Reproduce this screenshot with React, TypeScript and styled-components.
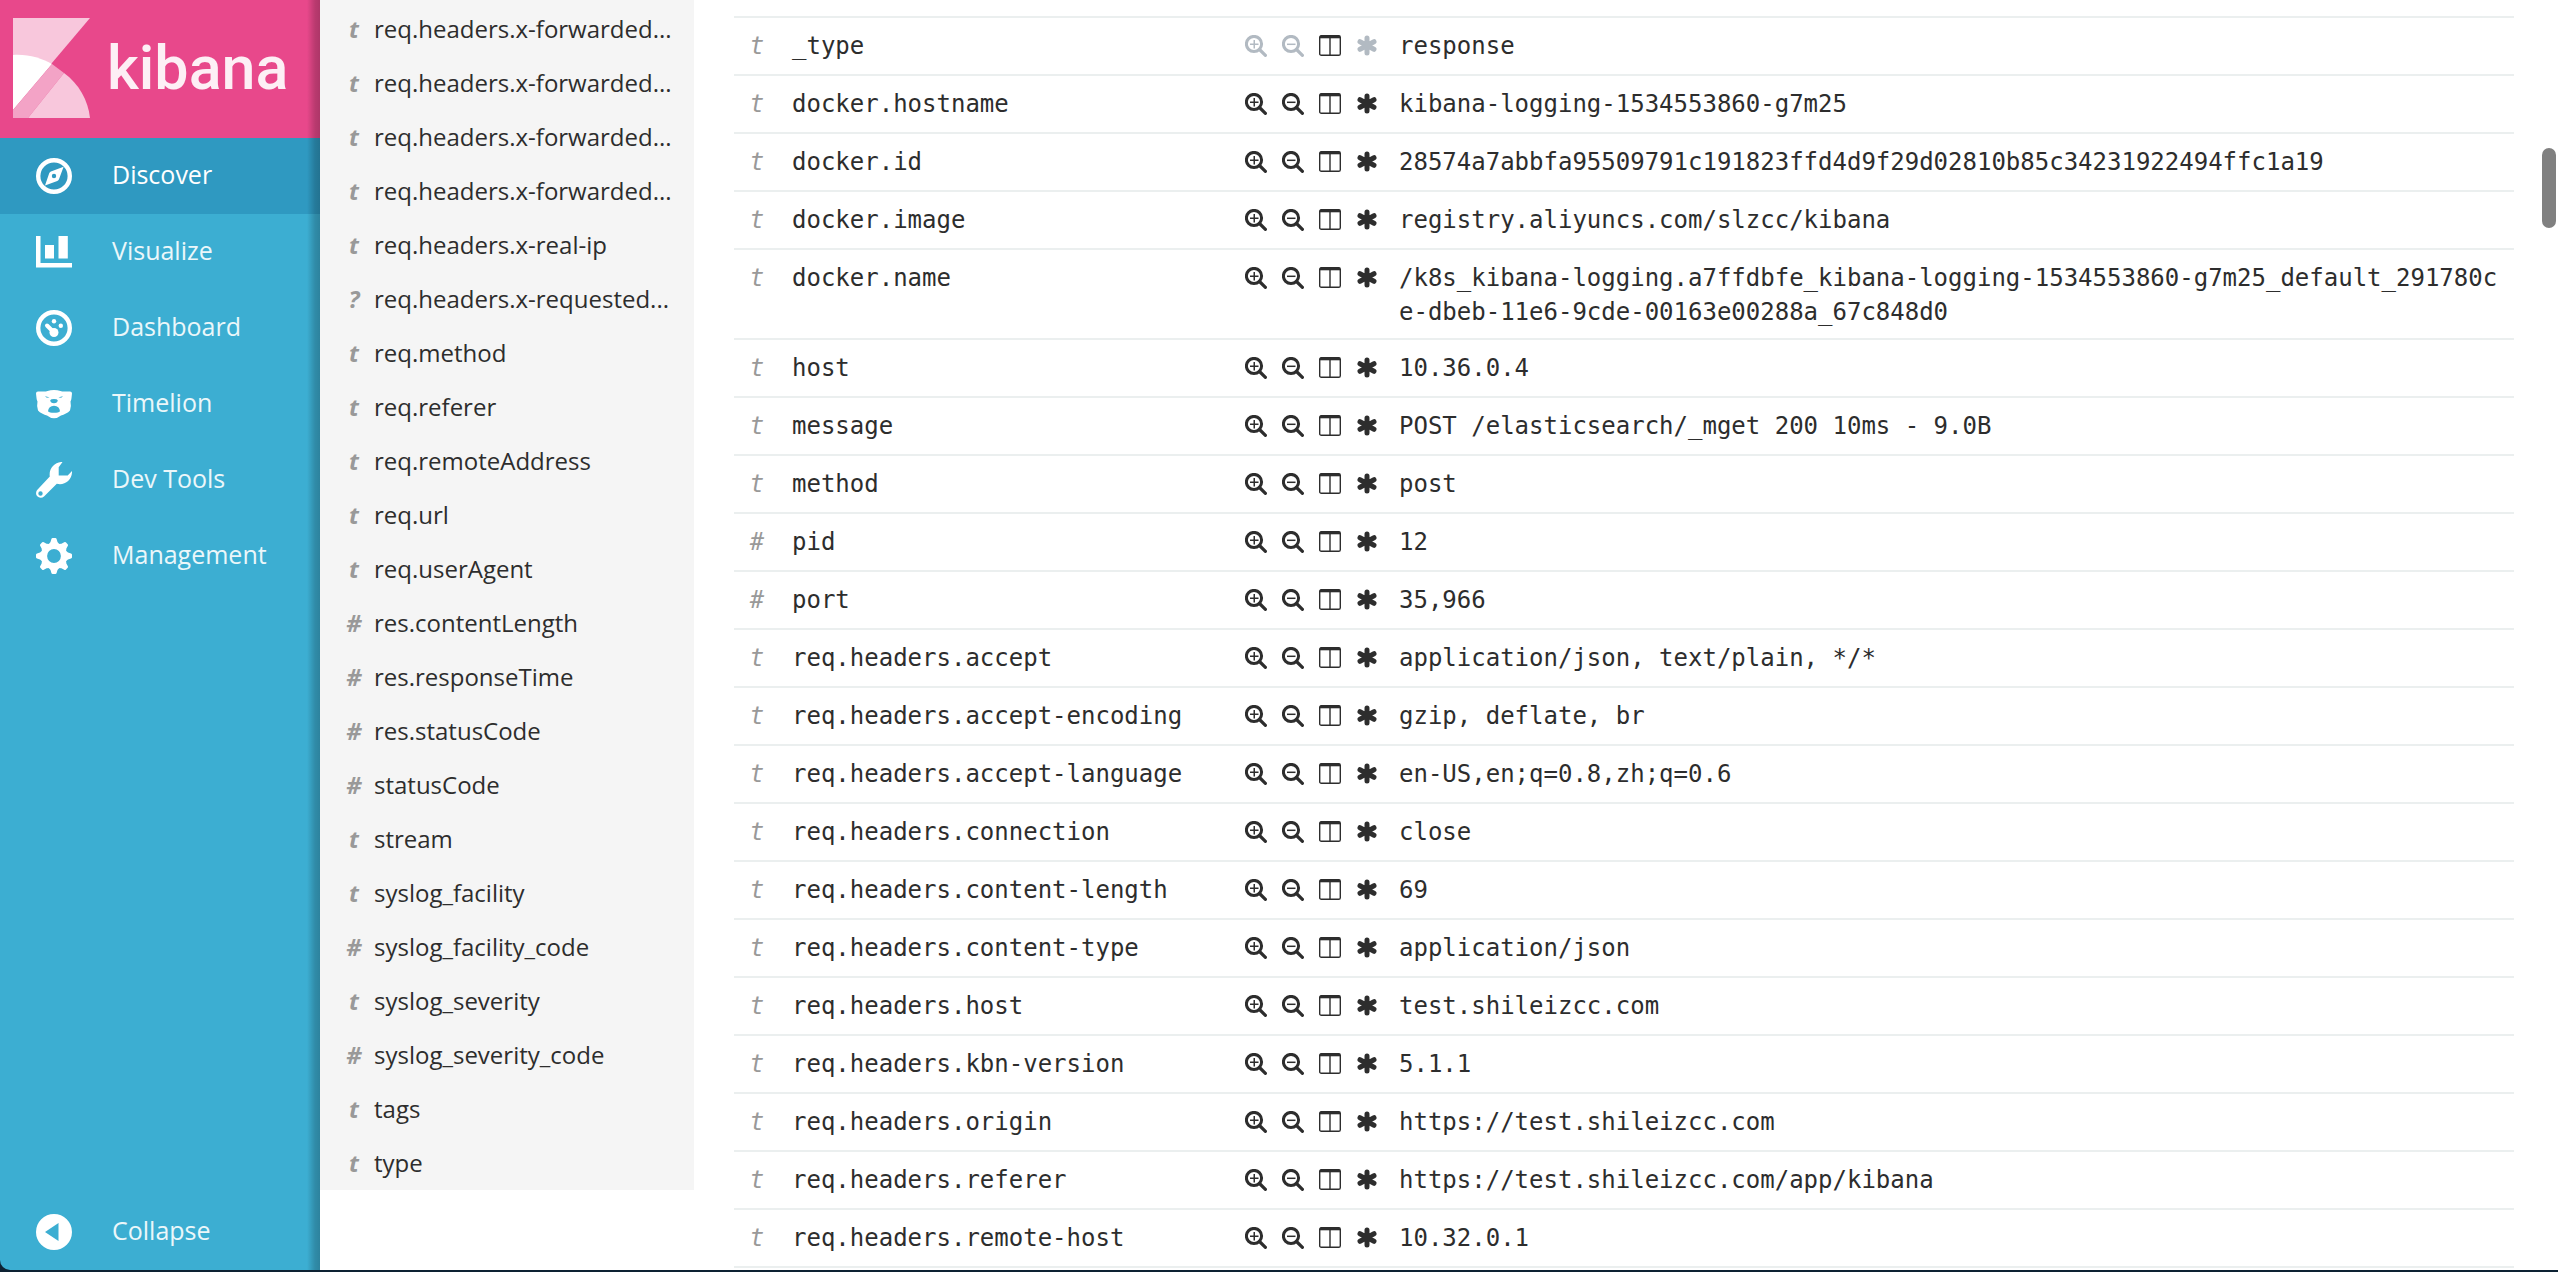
import React from 'react';
import styled, { createGlobalStyle } from 'styled-components';

const GlobalStyle = createGlobalStyle`
  *, *::before, *::after { box-sizing: border-box; }
  body {
    margin: 0;
    background: #fff;
    color: #2d2d2d;
    font-family: 'Open Sans', 'Noto Sans', sans-serif;
  }
  ul { list-style: none; margin: 0; padding: 0; }
`;

const Shell = styled.div`
  position: relative;
  height: 100vh;
  overflow: hidden;
  display: flex;
  align-items: stretch;
  background: #0d2233;
  padding-bottom: 2px;
`;

const edgeShade = 'linear-gradient(to left, rgba(0, 0, 0, 0.25), rgba(0, 0, 0, 0.2) 5px, rgba(0, 0, 0, 0) 13px)';

const Nav = styled.nav`
  flex: 0 0 320px;
  display: flex;
  flex-direction: column;
  background: ${edgeShade} #3caed2;
  border-bottom-left-radius: 10px;
`;

const Brand = styled.a`
  height: 138px;
  display: flex;
  align-items: center;
  gap: 14px;
  padding: 0 13px 2px;
  background: ${edgeShade} #e8488b;
  color: #fdeff5;
  font: 500 61px/80px Roboto, sans-serif;
  text-decoration: none;
`;

const NavList = styled.ul`
  flex: 1;
`;

const navEntry = `
  display: flex;
  align-items: center;
  gap: 40px;
  width: 100%;
  height: 76px;
  padding: 0 36px;
  border: 0;
  color: #fff;
  font: 500 25px/36px 'Open Sans', 'Noto Sans', sans-serif;
  text-align: left;
  text-decoration: none;
  cursor: pointer;
`;

const NavLink = styled.a<{ $active?: boolean }>`
  ${navEntry}
  background: ${(p) => (p.$active ? `${edgeShade} #2f99c1` : 'transparent')};
`;

const CollapseButton = styled.button`
  ${navEntry}
  background: transparent;
`;

const NavLabel = styled.span<{ $active?: boolean }>`
  padding-bottom: 4px;
  color: ${(p) => (p.$active ? '#fff' : '#ebf7fa')};
`;

const Page = styled.main`
  flex: 1;
  min-width: 0;
  display: flex;
  align-items: flex-start;
  background: #fff;
`;

const Fields = styled.ul`
  flex: 0 0 374px;
  && { padding: 2px 0 0; }
  background: #f5f5f5;
`;

const Field = styled.li`
  display: flex;
  align-items: center;
  height: 54px;
  padding: 0 22px 0 24px;
  font-size: 24px;
  line-height: 34px;
`;

const FieldType = styled.span`
  flex: 0 0 20px;
  margin-right: 10px;
  text-align: center;
  color: #999;
  font-weight: 700;
  font-style: italic;
`;

const FieldName = styled.span`
  white-space: nowrap;
`;

const Doc = styled.section`
  flex: 1;
  min-width: 0;
  padding: 16px 44px 0 40px;
`;

const DocTable = styled.table`
  width: 100%;
  table-layout: fixed;
  border-collapse: collapse;
  border-bottom: 2px solid #ebefef;
  font: 24px/34px 'DejaVu Sans Mono', 'Liberation Mono', monospace;
`;

const Row = styled.tr`
  border-top: 2px solid #ebefef;
`;

const Cell = styled.td`
  padding: 11px 10px 9px;
  vertical-align: top;
  word-break: break-all;
`;

const TypeCell = styled(Cell)`
  padding-left: 0;
  padding-right: 2px;
  text-align: center;
  color: #999;
  font-style: italic;
`;

const NameCell = styled.th`
  padding: 11px 10px 9px;
  vertical-align: top;
  text-align: left;
  font-weight: 400;
`;

const ActionCell = styled.td`
  padding: 10px;
  vertical-align: top;
`;

const Col = styled.col<{ $w?: number }>`
  width: ${(p) => (p.$w ? p.$w + 'px' : 'auto')};
`;

const Actions = styled.div`
  display: flex;
  align-items: center;
  gap: 15px;
  height: 36px;
`;

const Action = styled.button`
  display: flex;
  width: 22px;
  height: 22px;
  padding: 0;
  border: 0;
  background: none;
  color: #2d2d2d;
  cursor: pointer;
  &:disabled { color: #b2bac2; cursor: default; }
`;

const ScrollThumb = styled.div`
  position: absolute;
  top: 148px;
  right: 2px;
  width: 14px;
  height: 80px;
  border-radius: 7px;
  background: #808080;
`;

const LogoMark = () => (
  <svg width="80" height="100" viewBox="0 0 80 100" aria-hidden="true">
    <path d="M0 0H77L0 91Z" fill="#f8c7dc" />
    <path d="M0 37C15 36 28 40 39 46L0 92Z" fill="#fff" />
    <path d="M39 46L51 55L15 100H0V92Z" fill="#f3a3c6" />
    <path d="M51 55C66 66 75 82 77 100H15Z" fill="#f8c7dc" />
  </svg>
);

const NavIcon = ({ children }: { children: React.ReactNode }) => (
  <svg width="36" height="36" viewBox="0 0 36 36" fill="#fff" aria-hidden="true">
    {children}
  </svg>
);

const icons: Record<string, React.ReactNode> = {
  discover: (
    <>
      <circle cx="18" cy="18" r="15.8" fill="none" stroke="#fff" strokeWidth="4.4" />
      <path fillRule="evenodd" d="M27.6 8.8L23 21.2Q22.5 22.4 21.3 23L9 27.6L13.2 15.3Q13.7 14.1 14.9 13.5ZM18 15.8A2.2 2.2 0 1 0 18 20.2A2.2 2.2 0 1 0 18 15.8Z" />
    </>
  ),
  visualize: <path d="M0 2H4.500V29H36V33.600H0ZM9 11H18V24.500H9ZM22.500 2H31.800V24.500H22.500Z" />,
  dashboard: (
    <>
      <circle cx="18" cy="18" r="15.8" fill="none" stroke="#fff" strokeWidth="4.4" />
      <circle cx="18" cy="11.2" r="2.2" />
      <circle cx="24.8" cy="15.8" r="2.2" />
      <circle cx="18" cy="22.5" r="4.5" />
      <path d="M11 15.5L18 22.5" stroke="#fff" strokeWidth="4" strokeLinecap="round" />
    </>
  ),
  timelion: (
    <path
      fillRule="evenodd"
      d="M0 7.500Q0 5.500 2 5.500H8Q10 5.500 11.500 5Q14.500 4 18 4Q21.500 4 24.500 5Q26 5.500 28 5.500H34Q36 5.500 36 7.500L35.500 12Q35.300 14 34.500 15.500Q35.500 20 34 24.500C32 27 28 28.500 25 29.500Q21.500 32.300 18 32.300Q14.500 32.300 11 29.500C8 28.500 4 27 2 24.500Q.5 20 1.500 15.500Q.7 14 .5 12ZM9 10.300Q10.500 12.300 13.500 11.700Q11.500 10.700 9 10.300ZM27 10.300Q25.500 12.300 22.500 11.700Q24.500 10.700 27 10.300ZM14.200 14.200Q14.800 13 18 13Q21.200 13 21.800 14.200Q21.500 17.200 18 17.200Q14.500 17.200 14.200 14.200ZM12 25.300Q12.500 20 18 19.800Q23.500 20 24 25.300Q22.500 26.800 18 26.800Q13.500 26.800 12 25.300Z"
    />
  ),
  tools: (
    <path
      fillRule="evenodd"
      d="M26.500 0C19 -.500 12.500 6.500 13.800 14.600L1.600 27.600A4.700 4.700 0 0 0 8 34.600L20.800 21.800C28.500 24 36.500 17.800 36 9L31.700 13.600H22.700V5.200ZM4.500 29.300A2.200 2.200 0 1 1 4.500 33.700A2.200 2.200 0 1 1 4.500 29.300Z"
    />
  ),
  management: (
    <>
      <circle cx="18" cy="18" r="10" fill="none" stroke="#fff" strokeWidth="6.2" />
      {[0, 45, 90, 135, 180, 225, 270, 315].map((a) => (
        <path key={a} transform={`rotate(${a} 18 18)`} d="M12.500 6.500L14.500 4L15.400 1Q15.700 0 16.700 0H19.300Q20.300 0 20.600 1L21.500 4L23.500 6.500V8.500H12.500Z" />
      ))}
    </>
  ),
  collapse: <path fillRule="evenodd" d="M18 0A18 18 0 1 1 18 36A18 18 0 1 1 18 0ZM22.500 9L9 18L22.500 27Z" />,
};

const Magnifier = ({ plus }: { plus?: boolean }) => (
  <svg width="22" height="22" viewBox="0 0 22 22" fill="none" stroke="currentColor" aria-hidden="true">
    <circle cx="9" cy="9" r="7.6" strokeWidth="3" />
    <path d="M14.500 14.500L20.400 20.400" strokeWidth="3.2" strokeLinecap="round" />
    <path d={plus ? 'M5 9.300H13.500M9.250 5V13.500' : 'M5 9.300H13.500'} strokeWidth="1.5" />
  </svg>
);

const ColumnsIcon = () => (
  <svg width="22" height="22" viewBox="0 0 22 22" fill="none" stroke="currentColor" aria-hidden="true">
    <rect x=".7" y=".7" width="20.6" height="19.6" rx="1.6" strokeWidth="1.4" />
    <path d="M1 2H21" strokeWidth="2.6" />
    <path d="M11 2V20" strokeWidth="1.4" />
  </svg>
);

const AsteriskIcon = () => (
  <svg width="22" height="22" viewBox="0 0 22 22" stroke="currentColor" strokeWidth="5" strokeLinecap="round" aria-hidden="true">
    <path d="M11 3V18M4 6.700L18 14.300M18 6.700L4 14.300" />
  </svg>
);

const navItems = [
  ['discover', 'Discover'],
  ['visualize', 'Visualize'],
  ['dashboard', 'Dashboard'],
  ['timelion', 'Timelion'],
  ['tools', 'Dev Tools'],
  ['management', 'Management'],
];

const fields = [
  ['t', 'req.headers.x-forwarded...'],
  ['t', 'req.headers.x-forwarded...'],
  ['t', 'req.headers.x-forwarded...'],
  ['t', 'req.headers.x-forwarded...'],
  ['t', 'req.headers.x-real-ip'],
  ['?', 'req.headers.x-requested...'],
  ['t', 'req.method'],
  ['t', 'req.referer'],
  ['t', 'req.remoteAddress'],
  ['t', 'req.url'],
  ['t', 'req.userAgent'],
  ['#', 'res.contentLength'],
  ['#', 'res.responseTime'],
  ['#', 'res.statusCode'],
  ['#', 'statusCode'],
  ['t', 'stream'],
  ['t', 'syslog_facility'],
  ['#', 'syslog_facility_code'],
  ['t', 'syslog_severity'],
  ['#', 'syslog_severity_code'],
  ['t', 'tags'],
  ['t', 'type'],
];

const rows = [
  ['t', '_type', 'response'],
  ['t', 'docker.hostname', 'kibana-logging-1534553860-g7m25'],
  ['t', 'docker.id', '28574a7abbfa95509791c191823ffd4d9f29d02810b85c34231922494ffc1a19'],
  ['t', 'docker.image', 'registry.aliyuncs.com/slzcc/kibana'],
  ['t', 'docker.name', '/k8s_kibana-logging.a7ffdbfe_kibana-logging-1534553860-g7m25_default_291780ce-dbeb-11e6-9cde-00163e00288a_67c848d0'],
  ['t', 'host', '10.36.0.4'],
  ['t', 'message', 'POST /elasticsearch/_mget 200 10ms - 9.0B'],
  ['t', 'method', 'post'],
  ['#', 'pid', '12'],
  ['#', 'port', '35,966'],
  ['t', 'req.headers.accept', 'application/json, text/plain, */*'],
  ['t', 'req.headers.accept-encoding', 'gzip, deflate, br'],
  ['t', 'req.headers.accept-language', 'en-US,en;q=0.8,zh;q=0.6'],
  ['t', 'req.headers.connection', 'close'],
  ['t', 'req.headers.content-length', '69'],
  ['t', 'req.headers.content-type', 'application/json'],
  ['t', 'req.headers.host', 'test.shileizcc.com'],
  ['t', 'req.headers.kbn-version', '5.1.1'],
  ['t', 'req.headers.origin', 'https://test.shileizcc.com'],
  ['t', 'req.headers.referer', 'https://test.shileizcc.com/app/kibana'],
  ['t', 'req.headers.remote-host', '10.32.0.1'],
];

export default function App() {
  return (
    <>
      <GlobalStyle />
      <Shell>
        <Nav>
          <Brand href="#home">
            <LogoMark />
            kibana
          </Brand>
          <NavList>
            {navItems.map(([id, label], i) => (
              <li key={id}>
                <NavLink href={`#${id}`} $active={i === 0}>
                  <NavIcon>{icons[id]}</NavIcon>
                  <NavLabel $active={i === 0}>{label}</NavLabel>
                </NavLink>
              </li>
            ))}
          </NavList>
          <CollapseButton type="button">
            <NavIcon>{icons.collapse}</NavIcon>
            <NavLabel>Collapse</NavLabel>
          </CollapseButton>
        </Nav>
        <Page>
          <Fields>
            {fields.map(([type, name], i) => (
              <Field key={i}>
                <FieldType>{type}</FieldType>
                <FieldName>{name}</FieldName>
              </Field>
            ))}
          </Fields>
          <Doc>
            <DocTable>
              <colgroup>
                <Col $w={48} />
                <Col $w={453} />
                <Col $w={154} />
                <Col />
              </colgroup>
              <tbody>
                {rows.map(([type, name, value], i) => (
                  <Row key={name}>
                    <TypeCell>{type}</TypeCell>
                    <NameCell scope="row">{name}</NameCell>
                    <ActionCell>
                      <Actions>
                        <Action type="button" aria-label="Filter for value" disabled={i === 0}>
                          <Magnifier plus />
                        </Action>
                        <Action type="button" aria-label="Filter out value" disabled={i === 0}>
                          <Magnifier />
                        </Action>
                        <Action type="button" aria-label="Toggle column in table">
                          <ColumnsIcon />
                        </Action>
                        <Action type="button" aria-label="Filter for field present" disabled={i === 0}>
                          <AsteriskIcon />
                        </Action>
                      </Actions>
                    </ActionCell>
                    <Cell>{value}</Cell>
                  </Row>
                ))}
              </tbody>
            </DocTable>
          </Doc>
        </Page>
        <ScrollThumb />
      </Shell>
    </>
  );
}
